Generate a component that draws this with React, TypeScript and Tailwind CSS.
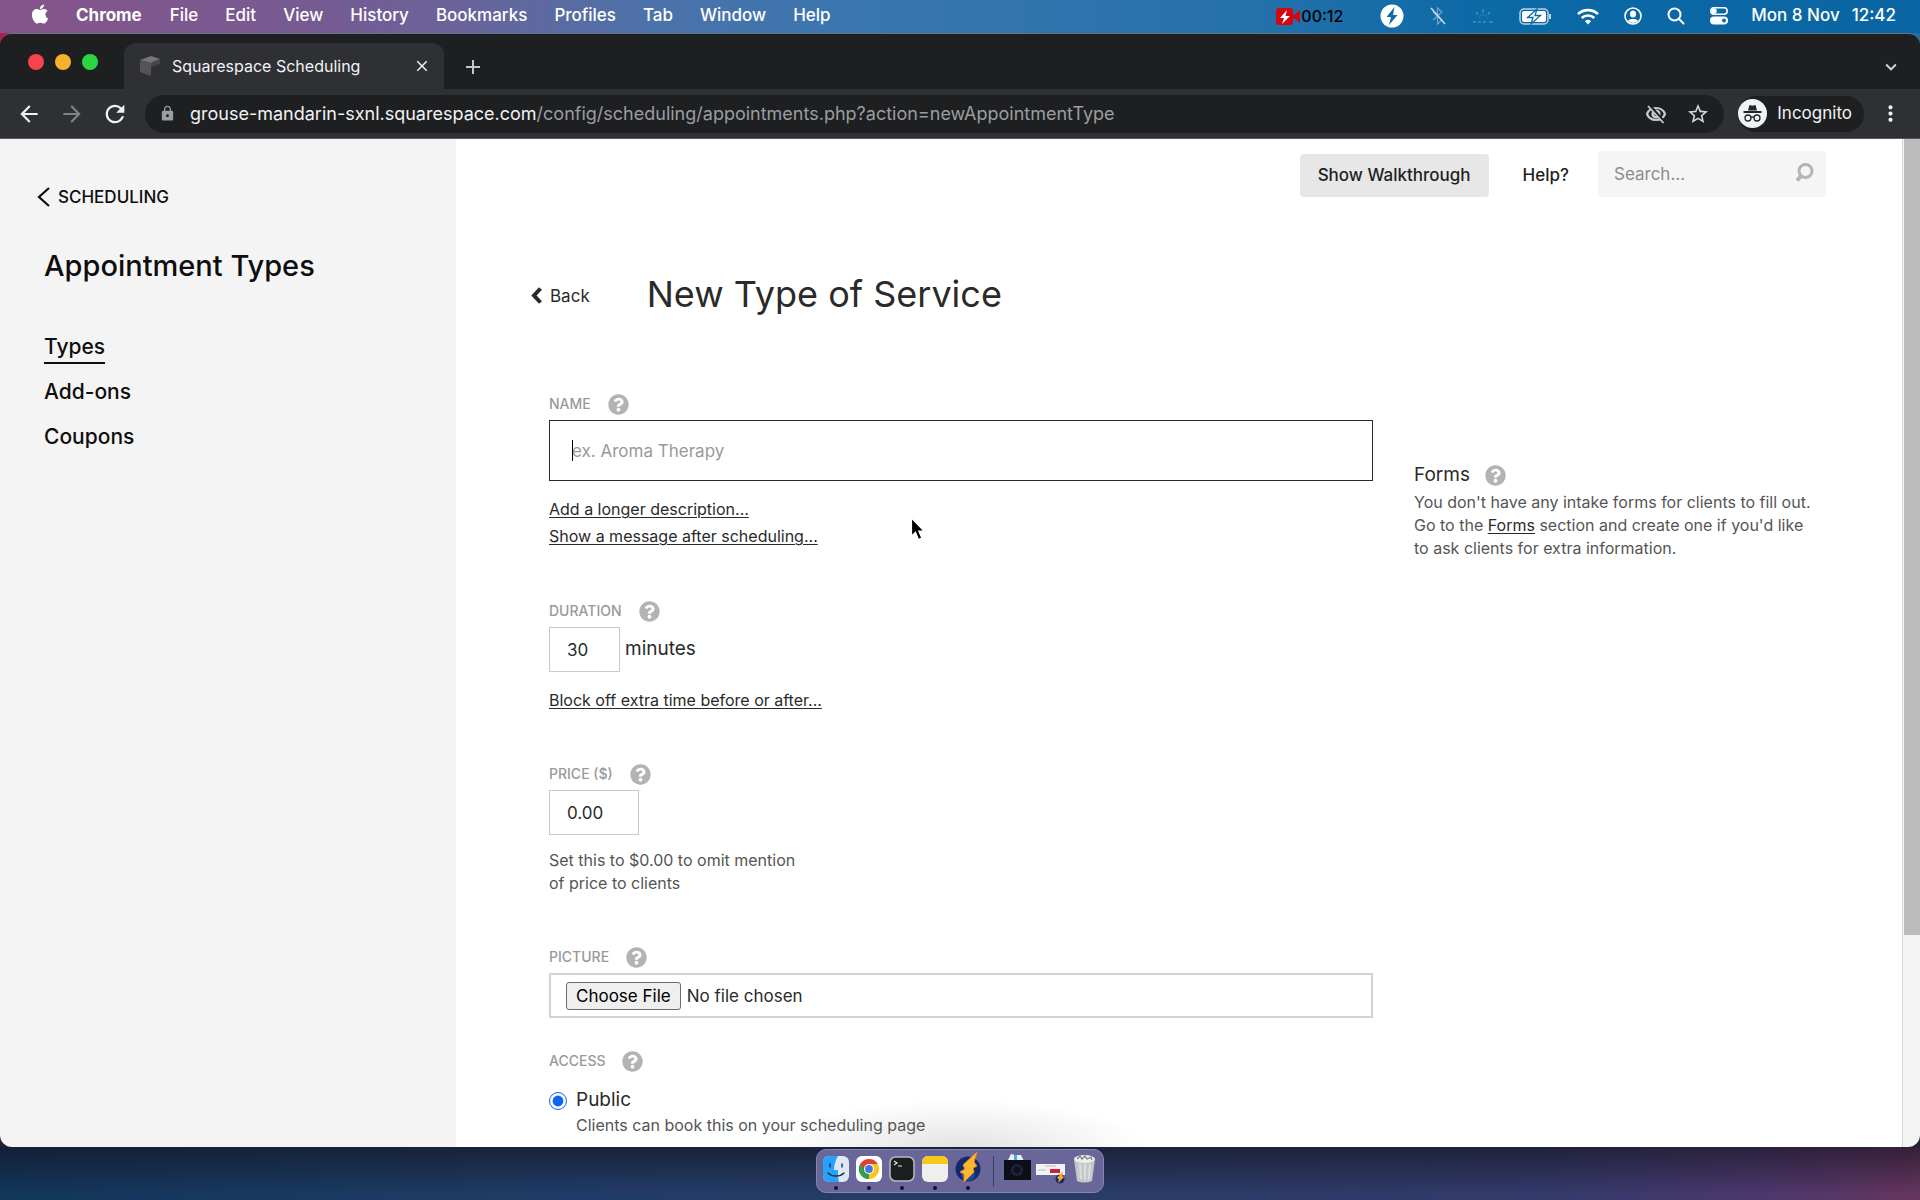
import React from "react";
import { FaApple, FaQuestionCircle } from "react-icons/fa";
import {
  MdAdd,
  MdArrowBack,
  MdArrowForward,
  MdClose,
  MdKeyboardArrowDown,
  MdLock,
  MdMoreVert,
  MdRefresh,
  MdStarBorder,
} from "react-icons/md";

const MENUS = ["File", "Edit", "View", "History", "Bookmarks", "Profiles", "Tab", "Window", "Help"];

function MenuBar() {
  return (
    <header className="flex h-[33px] shrink-0 items-center justify-between bg-[linear-gradient(90deg,#85558a_0%,#775a92_16%,#6a639b_24%,#4b72a9_34%,#3a76b0_45%,#2471ab_65%,#0b69a6_78%,#0a66a2_100%)] pr-6 pb-px pl-[29px] text-[17px] font-medium text-white">
      <nav className="flex items-center gap-[27px]">
        <button aria-label="Apple" className="-mt-1 w-5">
          <FaApple size={22} />
        </button>
        <button className="mr-px font-bold">Chrome</button>
        {MENUS.map((m) => (
          <button key={m}>{m}</button>
        ))}
      </nav>
      <div className="flex items-center gap-[25px]">
        <div className="mr-3 flex items-center text-base text-black">
          <svg width="25" height="19" viewBox="0 0 25 19" aria-hidden="true">
            <rect x="0" y="1" width="17" height="17" rx="3" fill="#d40710" />
            <path d="M16 9.500 24 3v13z" fill="#d40710" />
            <path d="M11 3 4 11h4l-2 6 8-8H9.500z" fill="#fff" />
          </svg>
          <span>00:12</span>
        </div>
        <svg width="24" height="24" viewBox="0 0 24 24" aria-hidden="true">
          <circle cx="12" cy="12" r="11.500" fill="#fff" />
          <path d="M14.500 3 6.500 13h4.500l-2 8L17.500 11H13z" fill="#1169a6" />
        </svg>
        <svg width="18" height="20" viewBox="0 0 18 20" fill="none" aria-hidden="true">
          <path d="M4 6l9 8-4.500 4V2L13 6l-9 8" stroke="#6f9fc6" strokeWidth="1.300" />
          <path d="M2 2l14 16" stroke="#cfe0ee" strokeWidth="1.500" />
        </svg>
        <svg width="22" height="16" viewBox="0 0 22 16" fill="none" stroke="#4b8cbd" strokeWidth="1.500" aria-hidden="true">
          <path d="M11 1v4M4 4l2 2.500M18 4l-2 2.500M1 14h3M6 14h3M11 14h3M17 14h4" />
          <path d="M7 10a4 3.500 0 0 1 8 0" strokeWidth="1" opacity="0.5" />
        </svg>
        <svg width="33" height="17" viewBox="0 0 33 17" fill="none" aria-hidden="true">
          <rect x="1" y="1" width="28" height="15" rx="4" stroke="#b9d3e6" strokeWidth="1.500" />
          <rect x="3" y="3" width="24" height="11" rx="2" fill="#fff" />
          <path d="M31 6v5" stroke="#b9d3e6" strokeWidth="2" />
          <path d="M18 1 8.500 9.500H14L12 16l9.500-8.500H16z" fill="#fff" stroke="#0c69a6" strokeWidth="1.300" />
        </svg>
        <svg width="22" height="17" viewBox="0 0 22 17" fill="none" stroke="#fff" strokeWidth="2.600" aria-hidden="true">
          <path d="M1 6.200a14.200 14.200 0 0 1 20 0M4.700 10a9 9 0 0 1 12.600 0" />
          <path d="M11 16.500l-3-3.300a4.400 4.400 0 0 1 6 0z" fill="#fff" stroke="none" />
        </svg>
        <svg width="18" height="18" viewBox="0 0 18 18" aria-hidden="true">
          <circle cx="9" cy="9" r="8" fill="none" stroke="#fff" strokeWidth="1.600" />
          <ellipse cx="9" cy="7" rx="3" ry="3.600" fill="#fff" />
          <path d="M4 13.800c1.200-2.500 8.800-2.500 10 0A7 7 0 0 1 4 13.800z" fill="#fff" />
        </svg>
        <svg width="18" height="18" viewBox="0 0 18 18" fill="none" stroke="#fff" strokeWidth="2" strokeLinecap="round" aria-hidden="true">
          <circle cx="7.500" cy="7.500" r="6" />
          <path d="M12 12l4.500 4.500" />
        </svg>
        <svg width="18" height="18" viewBox="0 0 18 18" aria-hidden="true">
          <rect x="0.800" y="0.800" width="16.400" height="6.400" rx="3.200" fill="none" stroke="#fff" strokeWidth="1.500" />
          <circle cx="4" cy="4" r="2.800" fill="#fff" />
          <rect x="0" y="9.500" width="18" height="8" rx="4" fill="#fff" />
          <circle cx="14" cy="13.500" r="2" fill="#0c69a6" />
        </svg>
        <div className="-ml-0.5 flex gap-3">
          <span>Mon 8 Nov</span>
          <span>12:42</span>
        </div>
      </div>
    </header>
  );
}

function TabStrip() {
  return (
    <div className="flex h-[55px] items-end bg-[#1e1f21] pr-[18px] pl-7">
      <div className="mb-[19px] flex gap-[11px]">
        <button aria-label="Close window" className="size-4 rounded-full bg-[#f5444e]" />
        <button aria-label="Minimise window" className="size-4 rounded-full bg-[#f6b12f]" />
        <button aria-label="Zoom window" className="size-4 rounded-full bg-[#2bd640]" />
      </div>
      <div className="ml-[26px] flex h-[46px] w-80 items-center rounded-t-xl bg-[#2f3034] pr-[13px] pl-4 text-base text-[#f1f2f4]">
        <svg width="20" height="22" viewBox="0 0 20 22" aria-hidden="true">
          <path d="M0 5 11 1l9 3-9 4z" fill="#77777a" />
          <path d="M0 5l11 3v13L0 17z" fill="#545457" />
          <path d="M11 8l9-4v5l-9 3z" fill="#47474a" />
        </svg>
        <span className="ml-3 flex-1 whitespace-nowrap">Squarespace Scheduling</span>
        <button aria-label="Close tab">
          <MdClose size={18} />
        </button>
      </div>
      <button aria-label="New tab" className="mb-[10px] ml-[17px] text-[#c4c6c9]">
        <MdAdd size={24} />
      </button>
      <button aria-label="Search tabs" className="mb-[11px] ml-auto text-[#d3d5d8]">
        <MdKeyboardArrowDown size={22} />
      </button>
    </div>
  );
}

function Toolbar() {
  return (
    <div className="flex h-[50px] items-center border-b border-[#58595c] bg-[#2f3034] pr-[17px] pl-4 text-[#f1f2f4]">
      <button aria-label="Back">
        <MdArrowBack size={26} />
      </button>
      <button aria-label="Forward" className="ml-[17px] text-[#7f8184]">
        <MdArrowForward size={26} />
      </button>
      <button aria-label="Reload" className="ml-4">
        <MdRefresh size={28} />
      </button>
      <div className="ml-4 flex h-[38px] flex-1 items-center rounded-full bg-[#1e1f21] pr-3.5 pl-3.5 text-lg text-[#9b9da0]">
        <MdLock size={17} />
        <p className="ml-3.5 flex-1 whitespace-nowrap">
          <span className="text-[#f1f2f4]">grouse-mandarin-sxnl.squarespace.com</span>
          /config/scheduling/appointments.php?action=newAppointmentType
        </p>
        <button aria-label="Third-party cookies blocked" className="text-[#c9cbce]">
          <svg width="20" height="20" viewBox="0 0 20 20" fill="none" stroke="currentColor" aria-hidden="true">
            <path d="M1 10c3-8 15-8 18 0-3 8-15 8-18 0z" strokeWidth="2.200" />
            <circle cx="10" cy="10" r="3.300" strokeWidth="2.600" />
            <path d="M3.500 1.500l15 17" stroke="#1e1f21" strokeWidth="3" />
            <path d="M2 2l15.500 17" strokeWidth="1.800" />
          </svg>
        </button>
        <button aria-label="Bookmark this page" className="ml-5 text-[#d3d5d8]">
          <MdStarBorder size={24} />
        </button>
      </div>
      <button className="ml-3.5 flex h-9 items-center gap-2.5 rounded-full bg-[#1e1f21] pr-3 text-[17px]">
        <svg width="29" height="29" viewBox="0 0 29 29" aria-hidden="true">
          <circle cx="14.500" cy="14.500" r="14.500" fill="#f1f2f4" />
          <path d="M10 11.500 11.500 6l3 .8 3-.8 1.500 5.500z" fill="#232427" />
          <path d="M5.500 13h18" stroke="#232427" strokeWidth="1.800" />
          <g fill="none" stroke="#232427" strokeWidth="1.300">
            <circle cx="10" cy="19" r="3" />
            <circle cx="19" cy="19" r="3" />
            <path d="M13 18.500q1.500-1 3 0" />
          </g>
        </svg>
        Incognito
      </button>
      <button aria-label="Chrome menu" className="ml-3.5">
        <MdMoreVert size={25} />
      </button>
    </div>
  );
}

function Sidebar() {
  return (
    <aside className="w-[456px] shrink-0 bg-[#f4f4f4] px-11 pt-[46px] font-medium text-[#0e0e0e]">
      <a href="#scheduling" className="-ml-[7px] flex items-center gap-2 text-[17px] leading-6">
        <svg width="13" height="20" viewBox="0 0 13 20" fill="none" stroke="currentColor" strokeWidth="2.200" aria-hidden="true">
          <path d="M12 1 2 10l10 9" />
        </svg>
        SCHEDULING
      </a>
      <h1 className="mt-[39px] text-[29px] leading-9">Appointment Types</h1>
      <nav className="mt-12 flex flex-col items-start gap-[15px] text-[21px] leading-[30px]">
        <a href="#types" className="border-b-2 border-[#0e0e0e]">
          Types
        </a>
        <a href="#addons" className="-mt-0.5">
          Add-ons
        </a>
        <a href="#coupons">Coupons</a>
      </nav>
    </aside>
  );
}

function HelpIcon({ topic }: { topic: string }) {
  return (
    <button type="button" aria-label={"Help: " + topic} className="text-[#b3b3b3]">
      <FaQuestionCircle size={21} />
    </button>
  );
}

function FieldLabel({ id, text }: { id: string; text: string }) {
  return (
    <div className="mb-1 flex h-6 items-center gap-[17px]">
      <label htmlFor={id} className="text-sm font-medium text-[#999]">
        {text}
      </label>
      <HelpIcon topic={text} />
    </div>
  );
}

const linkClass = "underline underline-offset-2 decoration-1 text-[#2a2a2a]";

function ServiceForm() {
  return (
    <form className="min-w-0 flex-1">
      <FieldLabel id="name" text="NAME" />
      <div className="relative">
        <input
          id="name"
          placeholder="ex. Aroma Therapy"
          className="block h-[61px] w-full border border-[#2a2a2a] bg-white px-[22px] text-[17px] text-[#2a2a2a] outline-none placeholder:text-[#999]"
        />
        <span className="absolute top-5 left-[23px] h-[21px] w-px bg-black" />
      </div>
      <div className="mt-[15px] flex flex-col items-start text-base leading-[27px]">
        <a href="#description" className={linkClass}>
          Add a longer description...
        </a>
        <a href="#message" className={linkClass}>
          Show a message after scheduling...
        </a>
      </div>

      <div className="mt-[49px]">
        <FieldLabel id="duration" text="DURATION" />
        <div className="flex items-center gap-[5px] text-[19px] text-[#2a2a2a]">
          <input id="duration" defaultValue="30" className="h-[45px] w-[71px] border border-[#c9c9c9] px-[17px] text-[17px]" />
          minutes
        </div>
        <a href="#padding" className={"mt-[15px] inline-block text-base leading-[27px] " + linkClass}>
          Block off extra time before or after...
        </a>
      </div>

      <div className="mt-12">
        <FieldLabel id="price" text="PRICE ($)" />
        <input id="price" defaultValue="0.00" className="block h-[45px] w-[90px] border border-[#c9c9c9] px-[17px] text-[17px] text-[#2a2a2a]" />
        <p className="mt-3.5 text-base leading-[23px] text-[#555]">
          Set this to $0.00 to omit mention
          <br />
          of price to clients
        </p>
      </div>

      <div className="mt-[50px]">
        <FieldLabel id="picture" text="PICTURE" />
        <input
          id="picture"
          type="file"
          className="block h-[45px] w-full border-2 border-[#d3d3d3] px-[15px] py-[7px] text-[17px] leading-[25px] text-[#2a2a2a] file:mr-1.5 file:h-7 file:rounded-[3px] file:border file:border-solid file:border-[#6b6b6b] file:bg-[#efefef] file:px-[9px] file:text-[17px] file:text-black"
        />
      </div>

      <div className="mt-[31px]">
        <FieldLabel id="public" text="ACCESS" />
        <div className="mt-3.5 flex items-start gap-[9px]">
          <input id="public" type="radio" name="access" defaultChecked className="mt-[5px] size-[18px] accent-[#0b65f5]" />
          <label htmlFor="public" className="text-[19px] leading-[26px] text-[#2a2a2a]">
            Public
            <span className="block text-base leading-6 text-[#555]">Clients can book this on your scheduling page</span>
          </label>
        </div>
      </div>
    </form>
  );
}

function FormsPanel() {
  return (
    <section className="mt-[71px] w-[412px] shrink-0">
      <div className="flex items-center gap-[15px]">
        <h3 className="text-[19px] leading-6 text-[#2a2a2a]">Forms</h3>
        <HelpIcon topic="Forms" />
      </div>
      <p className="mt-1 text-base leading-[23px] text-[#555]">
        You don't have any intake forms for clients to fill out.
        <br />
        Go to the{" "}
        <a href="#forms" className={linkClass}>
          Forms
        </a>{" "}
        section and create one if you'd like
        <br />
        to ask clients for extra information.
      </p>
    </section>
  );
}

function MainPane() {
  return (
    <main className="min-w-0 flex-1 bg-white pr-[76px] pl-[75px]">
      <div className="flex items-start justify-end pt-3 text-[17px] text-[#1f1f1f]">
        <button className="mt-[3px] h-[43px] rounded-sm bg-[#e7e7e7] px-[18px] font-medium">Show Walkthrough</button>
        <a href="#help" className="mt-[3px] ml-[34px] leading-[43px] font-medium">
          Help?
        </a>
        <div className="relative ml-[29px]">
          <input type="search" aria-label="Search" placeholder="Search..." className="block h-[46px] w-[228px] rounded-sm bg-[#f5f5f5] pr-12 pl-4 placeholder:text-[#8c8c8c]" />
          <svg width="19" height="20" viewBox="0 0 19 20" fill="none" stroke="#b5b5b5" className="absolute top-3 right-3" aria-hidden="true">
            <circle cx="10.500" cy="8" r="6.500" strokeWidth="3" />
            <path d="M6 13l-4 4.500" strokeWidth="4" />
          </svg>
        </div>
      </div>
      <div className="mt-[72px] flex items-center">
        <a href="#back" className="mt-1.5 flex items-center gap-2 text-[17px] text-[#2a2a2a]">
          <svg width="11" height="17" viewBox="0 0 11 17" fill="none" stroke="currentColor" strokeWidth="4" className="-mt-1" aria-hidden="true">
            <path d="M9.500 1.500 3 8.500l6.500 7" />
          </svg>
          Back
        </a>
        <h2 className="ml-[57px] text-4xl leading-[50px] text-[#2a2a2a]">New Type of Service</h2>
      </div>
      <div className="mt-[73px] flex gap-[41px] pl-[18px]">
        <ServiceForm />
        <FormsPanel />
      </div>
    </main>
  );
}

function Scrollbar() {
  return (
    <div className="w-[18px] shrink-0 border-l border-[#d4d4d4] bg-[#f4f4f4] pl-px">
      <div className="h-[79%] bg-[#bcbcbc]" />
    </div>
  );
}

function Finder() {
  return (
    <svg width="26" height="26" viewBox="0 0 26 26" aria-label="Finder">
      <rect width="26" height="26" rx="6" fill="#dfe7f2" />
      <path d="M6 0h9c-3 5-4 10-4 14h4c-.3 4 .1 8 1 12H6a6 6 0 0 1-6-6V6a6 6 0 0 1 6-6z" fill="#27a2fb" />
      <path d="M7 8v3M19 8v3M5 17c4 4 12 4 16 0" fill="none" stroke="#1d3349" strokeWidth="1.400" strokeLinecap="round" />
    </svg>
  );
}

function Chrome() {
  return (
    <svg width="26" height="26" viewBox="0 0 26 26" aria-label="Chrome">
      <rect width="26" height="26" rx="6" fill="#fff" />
      <path d="M13 13 4.300 8A10 10 0 0 1 21.700 8z" fill="#df4033" />
      <path d="M13 13 21.700 8A10 10 0 0 1 13 23z" fill="#fbc61b" />
      <path d="M13 13 13 23A10 10 0 0 1 4.300 8z" fill="#2fa04c" />
      <path d="M13 8h8.700l-4.400 7.500zM13 18l4.300-2.500L13 23z" fill="#fbc61b" />
      <path d="M13 8V3L4.300 8l4.400 7.500z" fill="#df4033" />
      <path d="M4.300 8 8.700 15.500 13 18v5A10 10 0 0 1 4.300 8z" fill="#2fa04c" />
      <circle cx="13" cy="13" r="5" fill="#fff" />
      <circle cx="13" cy="13" r="3.900" fill="#3f79e8" />
    </svg>
  );
}

function Terminal() {
  return (
    <svg width="26" height="26" viewBox="0 0 26 26" aria-label="Terminal">
      <rect x="1" y="1" width="24" height="24" rx="5.500" fill="#1c1e1f" stroke="#b9bbc4" strokeWidth="1.500" />
      <path d="M5 5l3 2-3 2M9 10h4" fill="none" stroke="#e6e6e6" strokeWidth="1.200" />
    </svg>
  );
}

function Notes() {
  return (
    <svg width="26" height="26" viewBox="0 0 26 26" aria-label="Notes">
      <rect width="26" height="26" rx="6" fill="#efefed" />
      <path d="M0 8V6a6 6 0 0 1 6-6h14a6 6 0 0 1 6 6v2z" fill="#f7c81c" />
    </svg>
  );
}

function Bolt() {
  return (
    <svg width="26" height="30" viewBox="0 0 26 30" aria-label="Recorder" className="-mt-1">
      <circle cx="13" cy="17" r="12.500" fill="#12296a" />
      <circle cx="13" cy="22" r="7" fill="#1b4a9c" />
      <path d="M22 0 8 13l2 4-5 3 4 2v8l10-10-1-4 4-2-3-4z" fill="#fdb92e" stroke="#f08a1d" />
    </svg>
  );
}

const APPS = [Finder, Chrome, Terminal, Notes, Bolt];

function Dock() {
  return (
    <footer className="flex h-[53px] shrink-0 justify-center bg-[linear-gradient(180deg,rgba(20,18,30,0.6),transparent_90%),linear-gradient(90deg,#12365a_0%,#213c68_30%,#2a3c68_60%,#333a6c_80%,#4c386c_92%,#66355f_100%)] pt-0.5">
      <div className="flex h-11 items-start rounded-[10px] border border-[#8886ab] bg-[#69679a] px-1.5 pt-1.5">
        <div className="flex gap-[7px]">
          {APPS.map((App, i) => (
            <div key={i} className="flex h-[34px] w-[26px] flex-col items-center justify-between">
              <App />
              <span className="size-1 rounded-full bg-[#12122b]" />
            </div>
          ))}
        </div>
        <div className="mr-2.5 ml-3 h-[31px] w-px bg-[#3e3e6c]" />
        <svg width="27" height="27" viewBox="0 0 27 27" aria-label="Screenshots" className="-mt-0.5">
          <path d="M4 6 7 0l4 1 6 0 3 6z" fill="#e9eef5" />
          <path d="M10 1h3v5h-3z" fill="#35b4d0" />
          <rect y="6" width="27" height="20" fill="#0d0f18" />
          <circle cx="13" cy="16" r="6" fill="#20223f" />
          <circle cx="13" cy="16" r="3.500" fill="#10111f" />
        </svg>
        <svg width="30" height="20" viewBox="0 0 30 20" aria-label="Recorder window" className="mt-2 ml-[5px]">
          <rect width="29" height="11" fill="#f3f3f5" />
          <path d="M9 2h11M2 6h8" stroke="#b5b5bd" />
          <rect x="14" y="5" width="10" height="4" fill="#d01f33" />
          <circle cx="24" cy="15" r="4.500" fill="#1a2a66" />
          <path d="M27 7l-6 7 2 1-1 4 6-6-2-1z" fill="#fba827" />
        </svg>
        <svg width="23" height="29" viewBox="0 0 23 29" aria-label="Bin" className="-mt-0.5 mr-px ml-[7px]">
          <path d="M1 5h21l-3 22q-7.500 3-15 0z" fill="#c5c6ca" />
          <path d="M7 10l1 15M12 10v16M17 10l-1 15" stroke="#dcdde0" strokeWidth="2" />
          <ellipse cx="11.500" cy="5" rx="10.500" ry="4" fill="#eceded" />
          <path d="M4 5l3-3 2 3 3-3 2 3 4-2 1 3" fill="none" stroke="#77787d" strokeWidth="1.200" />
        </svg>
      </div>
    </footer>
  );
}

export default function App() {
  return (
    <div className="flex h-screen flex-col overflow-hidden bg-[linear-gradient(90deg,#b01d50_0%,#b01d50_20%,#417e98_20%,#2a6c9c_100%)] font-['Inter',sans-serif]">
      <MenuBar />
      <div className="flex min-h-0 flex-1 flex-col bg-[linear-gradient(180deg,transparent_50%,#221f36_50%)]">
        <div className="flex min-h-0 flex-1 flex-col overflow-hidden rounded-xl border-t border-[#64757f]">
          <TabStrip />
          <Toolbar />
          <div className="relative flex min-h-0 flex-1">
            <Sidebar />
            <MainPane />
            <Scrollbar />
            <div className="pointer-events-none absolute bottom-0 left-1/2 h-12 w-[380px] -translate-x-1/2 bg-[radial-gradient(ellipse_at_bottom,rgba(60,60,70,0.14),transparent_70%)]" />
            <svg width="20" height="27" viewBox="0 0 20 27" className="absolute top-[378px] left-[910px]" aria-hidden="true">
              <path d="M1.500 1v18l4-3.800 3 7.300 3.300-1.400-3-7H14z" fill="#000" stroke="#fff" strokeWidth="1.200" />
            </svg>
          </div>
        </div>
      </div>
      <Dock />
    </div>
  );
}
